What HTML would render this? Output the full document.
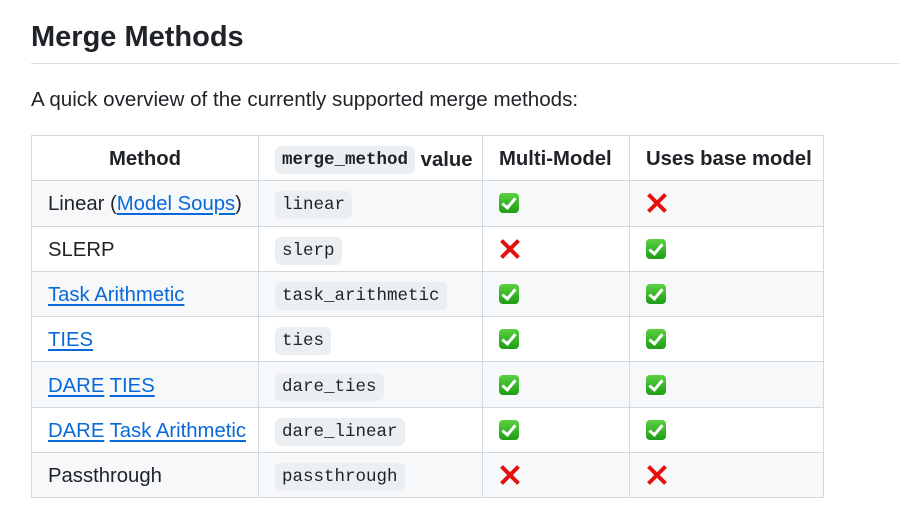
<!DOCTYPE html>
<html><head><meta charset="utf-8"><style>
body{margin:0;background:#fff;color:#1f2328;font-family:"Liberation Sans",sans-serif;width:899px;height:525px;overflow:hidden;position:relative}
h1{position:absolute;left:31px;top:17px;margin:0;font-size:29px;font-weight:bold;line-height:40px}
.hr{position:absolute;left:31px;top:63px;width:868px;height:1px;background:#d8dee4}
p{position:absolute;left:31px;top:86px;margin:0;font-size:20.6px;line-height:28px}
table{position:absolute;left:31px;top:135px;border-collapse:collapse;font-size:20.3px;table-layout:fixed;width:792px}
td,th{border:1px solid #d1d9e0;padding:2px 0 0 16px;height:45.3px;box-sizing:border-box;text-align:left;white-space:nowrap;vertical-align:middle;line-height:24px}
th{font-weight:bold}
th.c{text-align:center;padding:2px 0 0 0}
tr:nth-child(even) td{background:#f6f8fa}
code{font-family:"Liberation Mono",monospace;font-size:17.5px;background:#eceff2;border-radius:6px;padding:4px 7px}
th code{font-weight:bold}
.v{position:relative;top:2px}
a{color:#0969da;text-decoration:underline;text-underline-offset:3px}
.ck{display:inline-block;width:20px;height:20px;border-radius:4px;background:linear-gradient(#5bd13f,#1e9c16);vertical-align:-3px;position:relative}
.ck:after{content:"";position:absolute;left:6px;top:2px;width:5px;height:11px;border:solid #fff;border-width:0 3px 3px 0;transform:rotate(40deg)}
.x{display:inline-block;width:22px;height:22px;position:relative;vertical-align:-4px}
.x:before,.x:after{content:"";position:absolute;left:9px;top:-1px;width:4px;height:24px;background:#e4100f;transform:rotate(45deg)}
.x:after{transform:rotate(-45deg)}
</style></head><body>
<h1>Merge Methods</h1>
<div class="hr"></div>
<p>A quick overview of the currently supported merge methods:</p>
<table>
<colgroup><col style="width:227px"><col style="width:224px"><col style="width:147px"><col style="width:194px"></colgroup>
<tr><th class="c">Method</th><th><code>merge_method</code> <span class="v">value</span></th><th>Multi-Model</th><th>Uses base model</th></tr>
<tr><td>Linear (<a>Model Soups</a>)</td><td><code>linear</code></td><td><span class="ck"></span></td><td><span class="x"></span></td></tr>
<tr><td>SLERP</td><td><code>slerp</code></td><td><span class="x"></span></td><td><span class="ck"></span></td></tr>
<tr><td><a>Task Arithmetic</a></td><td><code>task_arithmetic</code></td><td><span class="ck"></span></td><td><span class="ck"></span></td></tr>
<tr><td><a>TIES</a></td><td><code>ties</code></td><td><span class="ck"></span></td><td><span class="ck"></span></td></tr>
<tr><td><a>DARE</a> <a>TIES</a></td><td><code>dare_ties</code></td><td><span class="ck"></span></td><td><span class="ck"></span></td></tr>
<tr><td><a>DARE</a> <a>Task Arithmetic</a></td><td><code>dare_linear</code></td><td><span class="ck"></span></td><td><span class="ck"></span></td></tr>
<tr><td>Passthrough</td><td><code>passthrough</code></td><td><span class="x"></span></td><td><span class="x"></span></td></tr>
</table>
</body></html>
